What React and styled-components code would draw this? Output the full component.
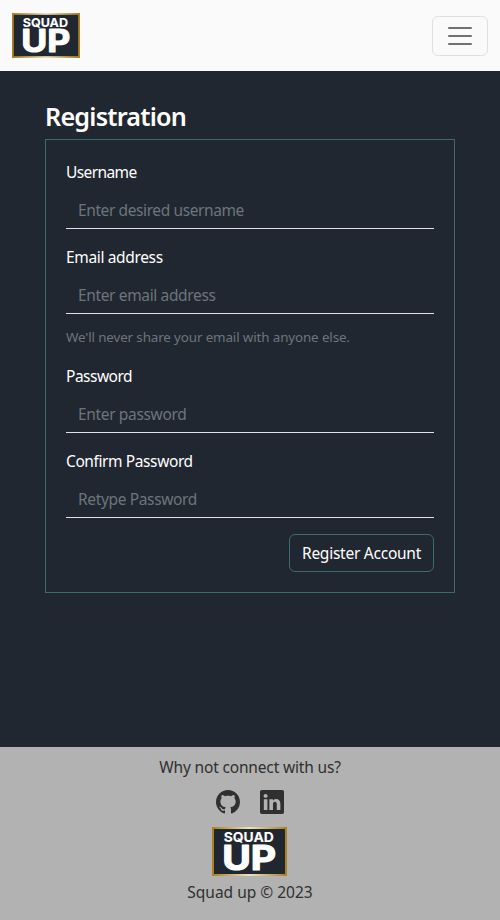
import React from "react";
import styled, { createGlobalStyle } from "styled-components";
import { BsGithub, BsLinkedin } from "react-icons/bs";

const GlobalStyle = createGlobalStyle`
  *, *::before, *::after { box-sizing: border-box; }
  body {
    margin: 0;
    background: #212730;
    color: #fff;
    font: 400 15.5px/24px "Segoe UI", "Noto Sans", sans-serif;
  }
`;

const Page = styled.div`
  display: flex;
  flex-direction: column;
  min-height: 100vh;
`;

const Navbar = styled.header`
  display: flex;
  align-items: center;
  justify-content: space-between;
  height: 71px;
  padding: 0 12px;
  background: #fafafa;
`;

const LogoSvg = styled.svg`
  display: block;
  width: ${(p) => p.$width}px;
  height: ${(p) => p.$height}px;
`;

const Toggler = styled.button`
  display: flex;
  align-items: center;
  justify-content: center;
  width: 56px;
  height: 40px;
  padding: 0;
  border: 1px solid #dfdfdf;
  border-radius: 6px;
  background: transparent;
`;

const Main = styled.main`
  flex: 1;
  padding: 30px 45px 0;
`;

const Title = styled.h2`
  margin: 0 0 7px;
  font-size: 25.2px;
  font-weight: 600;
  line-height: 31px;
  letter-spacing: ${(p) => p.$tracking}px;
`;

const Form = styled.form`
  display: flex;
  flex-direction: column;
  gap: 16px;
  padding: 20px;
  border: 1px solid #40686f;
`;

const Field = styled.div`
  display: flex;
  flex-direction: column;
`;

const Label = styled.label`
  margin-bottom: 8px;
  letter-spacing: ${(p) => p.$tracking}px;
`;

const Input = styled.input`
  width: 100%;
  height: 37px;
  padding: 6px 12px;
  border: 0;
  border-bottom: 1px solid #dee2e6;
  border-radius: 0;
  outline: 0;
  background: transparent;
  color: #fff;
  font: inherit;
  letter-spacing: ${(p) => p.$tracking}px;
  &::placeholder { color: #6c757d; opacity: 1; }
`;

const Hint = styled.small`
  margin-top: 13px;
  color: #6c757d;
  font-size: 13.4px;
  line-height: 21px;
  letter-spacing: ${(p) => p.$tracking}px;
`;

const SubmitButton = styled.button`
  align-self: flex-end;
  width: 145px;
  height: 38px;
  padding: 0;
  border: 1px solid #40686f;
  border-radius: 6px;
  background: transparent;
  color: #fff;
  font: inherit;
  white-space: nowrap;
  letter-spacing: ${(p) => p.$tracking}px;
`;

const Footer = styled.footer`
  display: flex;
  flex-direction: column;
  align-items: center;
  height: 173px;
  padding-top: 8px;
  background: #b2b2b2;
  color: #303030;
`;

const FooterText = styled.p`
  margin: 0;
  letter-spacing: ${(p) => p.$tracking}px;
`;

const Socials = styled.nav`
  display: flex;
  gap: 20px;
  margin: 11px 0 13px;
`;

const SocialLink = styled.a`
  display: block;
  width: 24px;
  height: 24px;
  color: #303030;
  svg { display: block; }
`;

const FooterLogo = styled.div`
  margin-bottom: 4px;
  margin-right: 1px;
`;

function Logo({ id, width, height }) {
  return (
    <LogoSvg
      $width={width}
      $height={height}
      viewBox="0 0 75 49"
      preserveAspectRatio="none"
      role="img"
      aria-label="Squad Up"
    >
      <defs>
        <linearGradient id={id}>
          <stop offset="0" stopColor="#aa7f1c" />
          <stop offset=".5" stopColor="#ede3b8" />
          <stop offset="1" stopColor="#aa7f1c" />
        </linearGradient>
      </defs>
      <rect width="75" height="49" fill={`url(#${id})`} />
      <rect x="2" y="2" width="71" height="45" fill="#212730" />
      <g fill="#fff" stroke="#fff" fontFamily="Inter, sans-serif" strokeLinejoin="round">
        <text x="11.8" y="15.2" fontSize="13.4" fontWeight="700" strokeWidth=".1" textLength="50" lengthAdjust="spacingAndGlyphs">SQUAD</text>
        <text x="10.2" y="43" fontSize="33.6" fontWeight="700" strokeWidth="1.2" textLength="54" lengthAdjust="spacingAndGlyphs">UP</text>
      </g>
    </LogoSvg>
  );
}

const fields = [
  { id: "username", label: "Username", placeholder: "Enter desired username", type: "text", lt: -0.6, pt: -0.4 },
  { id: "email", label: "Email address", placeholder: "Enter email address", type: "email", lt: -0.35, pt: -0.36, hint: "We'll never share your email with anyone else." },
  { id: "password", label: "Password", placeholder: "Enter password", type: "password", lt: -0.5, pt: -0.35 },
  { id: "confirm", label: "Confirm Password", placeholder: "Retype Password", type: "password", lt: -0.4, pt: -0.35 },
];

export default function App() {
  return (
    <Page>
      <GlobalStyle />
      <Navbar>
        <Logo id="navGold" width={68} height={45} />
        <Toggler type="button" aria-label="Toggle navigation">
          <svg width="30" height="30" viewBox="0 0 30 30">
            <path stroke="#717171" strokeWidth="2" strokeLinecap="round" strokeMiterlimit="10" d="M4 7h22M4 15h22M4 23h22" />
          </svg>
        </Toggler>
      </Navbar>
      <Main>
        <Title $tracking={-0.8}>Registration</Title>
        <Form onSubmit={(e) => e.preventDefault()}>
          {fields.map((f) => (
            <Field key={f.id}>
              <Label htmlFor={f.id} $tracking={f.lt}>{f.label}</Label>
              <Input id={f.id} type={f.type} placeholder={f.placeholder} $tracking={f.pt} />
              {f.hint && <Hint $tracking={-0.13}>{f.hint}</Hint>}
            </Field>
          ))}
          <SubmitButton type="submit" $tracking={-0.25}>Register Account</SubmitButton>
        </Form>
      </Main>
      <Footer>
        <FooterText $tracking={-0.16}>Why not connect with us?</FooterText>
        <Socials>
          <SocialLink href="#github" aria-label="GitHub"><BsGithub size={24} /></SocialLink>
          <SocialLink href="#linkedin" aria-label="LinkedIn"><BsLinkedin size={24} /></SocialLink>
        </Socials>
        <FooterLogo><Logo id="footerGold" width={75} height={49} /></FooterLogo>
        <FooterText $tracking={0}>Squad up © 2023</FooterText>
      </Footer>
    </Page>
  );
}
